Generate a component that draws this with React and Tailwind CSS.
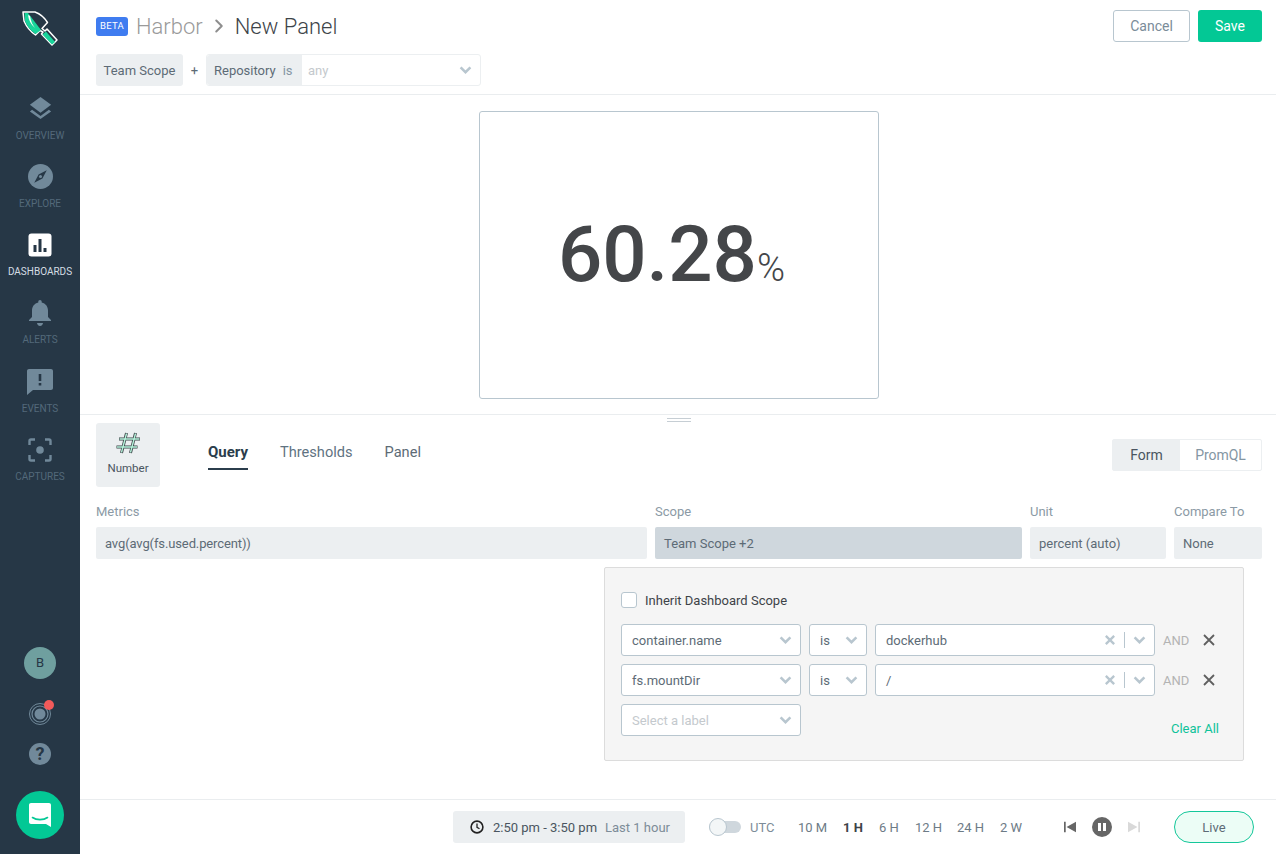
import { ChevronRight } from "lucide-react";

const sans = "font-['Roboto','Liberation_Sans',sans-serif]";

function Chevron({ className = "" }) {
  return (
    <svg viewBox="0 0 14 9" className={`h-[8px] w-[13px] ${className}`} fill="none" stroke="#b8c6cf" strokeWidth="2.8">
      <path d="M1.500 1.500 7 7l5.500-5.500" />
    </svg>
  );
}

function Cross({ className = "", color, width }) {
  return (
    <svg viewBox="0 0 12 12" className={className} fill="none" stroke={color} strokeWidth={width}>
      <path d="M1 1l10 10M11 1 1 11" />
    </svg>
  );
}

function Logo() {
  return (
    <svg viewBox="0 0 80 60" className="h-[60px] w-20">
      <path d="M23 12H35Q43 15 47.500 22.500L42 28.500 45 31 47 29 57 40 52 45 41.500 34 43 32 40 30.500 35.500 35Q28 30 24 21Z" fill="#263746" stroke="#fff" strokeWidth="1.500" strokeLinejoin="round" />
      <path d="M24.500 13 28 13 41 30 35.500 34Q28 29 25 21Z" fill="#19d49b" />
      <path d="M28 15Q29 23 35 28 31 23 30 16Z" fill="#fff" />
      <path d="M46 31.500 55 42 52 44.500 42.500 34.500Z" fill="#19d49b" />
    </svg>
  );
}

function NavItem({ label, active, children }) {
  return (
    <div className="flex h-[68.250px] flex-col items-center">
      <div className="flex h-[30px] w-[30px] items-center justify-center">{children}</div>
      <span className={`mt-[5px] text-[10px] leading-[14px] ${active ? "text-[#d4dde3]" : "text-[#53697a]"}`}>{label}</span>
    </div>
  );
}

function Sidebar() {
  const icon = "#71899a";
  return (
    <aside className="flex h-[854px] w-20 shrink-0 flex-col items-center bg-[#263746]">
      <Logo />
      <nav className="mt-[33.600px] w-full">
        <NavItem label="OVERVIEW">
          <svg viewBox="0 0 26 26" className="mb-[2px] h-[23px] w-[23px]" fill={icon}>
            <path d="M13 1 25 10 13 19 1 10Z" />
            <path d="M3.500 15.500 1 17.500 13 26 25 17.500 22.500 15.500 13 22.500Z" />
          </svg>
        </NavItem>
        <NavItem label="EXPLORE">
          <svg viewBox="0 0 26 26" className="h-[25px] w-[25px]">
            <circle cx="13" cy="13" r="13" fill={icon} />
            <path d="M19.500 6.500 15 15 6.500 19.500 11 11Z" fill="#263746" />
            <circle cx="13" cy="13" r="1.600" fill={icon} />
          </svg>
        </NavItem>
        <NavItem label="DASHBOARDS" active>
          <svg viewBox="0 0 24 24" className="h-6 w-6">
            <rect width="23" height="23" x="0.500" y="0.500" rx="3" fill="#fff" />
            <path d="M5.500 12h3v7h-3zM10.500 6h3v13h-3zM15.500 15h3v4h-3z" fill="#263746" />
          </svg>
        </NavItem>
        <NavItem label="ALERTS">
          <svg viewBox="0 0 22 26" className="h-[26px] w-[22px]" fill={icon}>
            <path d="M11 0c1 0 1.700.8 1.700 1.800v.7C16.600 3.400 19 6.600 19 10.500V17l3 3v1H0v-1l3-3v-6.500c0-3.900 2.400-7.100 6.300-8v-.7C9.300.8 10 0 11 0Z" />
            <path d="M8 23h6c0 1.500-1.300 3-3 3s-3-1.500-3-3Z" />
          </svg>
        </NavItem>
        <NavItem label="EVENTS">
          <svg viewBox="0 0 26 26" className="h-[26px] w-[26px]">
            <path d="M2 0h22c1.100 0 2 .9 2 2v17c0 1.100-.9 2-2 2H6l-6 5V2C0 .9.900 0 2 0Z" fill={icon} />
            <path d="M11.700 5h2.600v7h-2.600zM11.700 14h2.600v2.600h-2.600z" fill="#263746" />
          </svg>
        </NavItem>
        <NavItem label="CAPTURES">
          <svg viewBox="0 0 24 24" className="h-6 w-6" fill="none" stroke={icon} strokeWidth="2.400">
            <path d="M1.500 7V3c0-.8.700-1.500 1.500-1.500h4M17 1.500h4c.8 0 1.500.7 1.500 1.500v4M22.500 17v4c0 .8-.7 1.500-1.500 1.500h-4M7 22.500H3c-.8 0-1.500-.7-1.500-1.500v-4" />
            <circle cx="12" cy="12" r="3.800" fill={icon} stroke="none" />
          </svg>
        </NavItem>
      </nav>
      <div className="mt-auto flex flex-col items-center">
        <div className="flex h-8 w-8 items-center justify-center rounded-full bg-[#6f9f9f] text-[13px] text-[#263746]">B</div>
        <div className="relative mt-6 h-[22px] w-[22px]">
          <svg viewBox="0 0 22 22" className="h-[22px] w-[22px]" fill="none" stroke="#71899a">
            <circle cx="11" cy="11" r="10.500" />
            <circle cx="11" cy="11" r="8" strokeWidth="1.200" />
            <circle cx="11" cy="11" r="5.500" fill="#71899a" stroke="none" />
          </svg>
          <span className="absolute right-[-3px] top-[-3px] h-[10px] w-[10px] rounded-full bg-[#f25a5a]" />
        </div>
        <div className="mt-[18px] flex h-[22px] w-[22px] items-center justify-center rounded-full bg-[#71899a] text-[18px] font-bold leading-none text-[#263746]">?</div>
        <div className="mb-[15px] mt-[26px] flex h-12 w-12 items-center justify-center rounded-full bg-[#03c895]">
          <svg viewBox="0 0 22 24" className="h-6 w-[22px]">
            <path d="M2 0h18c1.100 0 2 .9 2 2v22l-5-3H2c-1.100 0-2-.9-2-2V2C0 .9.900 0 2 0Z" fill="#fff" />
            <path d="M3.500 14.500c4 2.800 11 2.800 15 0" fill="none" stroke="#03c895" strokeWidth="1.600" strokeLinecap="round" />
          </svg>
        </div>
      </div>
    </aside>
  );
}

function Header() {
  return (
    <header className="h-[95px] border-b border-[#eaedef] pl-4 pr-[14px]">
      <div className="flex items-start justify-between pt-[10px]">
        <div className="flex items-center pt-[1px]">
          <span className="flex h-[19px] w-8 items-center justify-center rounded-[3px] bg-[#3f7cf0] text-[9.500px] tracking-[0.3px] text-white">BETA</span>
          <span className="ml-2 h-[30px] text-[22px] font-light leading-[32px] text-[#9a9a9a]">Harbor</span>
          <ChevronRight className="ml-[5px] h-[22px] w-[22px] text-[#8e8e8e]" strokeWidth={2.200} />
          <span className="ml-[5px] h-[30px] text-[22px] font-light leading-[32px] text-[#3d4348]">New Panel</span>
        </div>
        <div className="flex gap-2">
          <button className="h-8 w-[77px] rounded-[3px] border border-[#b8c6cf] text-sm text-[#7a8c99]">Cancel</button>
          <button className="h-8 w-16 rounded-[3px] bg-[#03c895] text-sm text-white">Save</button>
        </div>
      </div>
      <div className="mt-3 flex h-8 items-center text-[13px]">
        <div className="flex h-8 w-[87px] items-center justify-center rounded-[3px] bg-[#eceff1] pt-[2px] text-[#5d6b76]">Team Scope</div>
        <span className="w-[23px] pt-[2px] text-center text-[#5d6b76]">+</span>
        <div className="flex h-8 w-[275px] rounded-[3px] border border-[#eceff1]">
          <div className="flex w-[95px] items-center rounded-l-[3px] bg-[#eceff1] pl-[7px] pt-[2px] text-[#5d6b76]">
            Repository<span className="ml-[7px] text-[#8496a3]">is</span>
          </div>
          <div className="flex flex-1 items-center justify-between pl-[6px] pr-[8px] text-[#c4c9cd]">
            <span className="pt-[2px]">any</span>
            <Chevron />
          </div>
        </div>
      </div>
    </header>
  );
}

function Preview() {
  return (
    <section className="flex h-[320px] justify-center border-b border-[#eaedef] pl-[2px] pt-4">
      <div className="flex h-[288px] w-[400px] items-center justify-center rounded-[3px] border border-[#b8c6cf] pr-[15px] text-[#444649]">
        <span className="text-[78px] font-medium leading-none">60.28</span>
        <span className="mt-[26px] text-[38px] font-light leading-none">%</span>
      </div>
    </section>
  );
}

function SelectBox({ text, width, placeholder }) {
  return (
    <div className={`flex h-8 items-center justify-between rounded-[3px] border border-[#b8c6cf] bg-white pl-[10px] pr-2 text-[13px] ${width} ${placeholder ? "text-[#c4c9cd]" : "text-[#5d6b76]"}`}>
      <span className="pt-[2px]">{text}</span>
      <Chevron />
    </div>
  );
}

function ScopeRow({ name, value }) {
  return (
    <div className="flex h-8 items-center">
      <SelectBox text={name} width="w-[180px]" />
      <div className="ml-2 flex h-8 w-[58px] items-center justify-between rounded-[3px] border border-[#b8c6cf] bg-white pl-[10px] pr-2 text-[13px] text-[#5d6b76]">
        <span className="pt-[2px]">is</span>
        <Chevron />
      </div>
      <div className="ml-2 flex h-8 w-[280px] items-center rounded-[3px] border border-[#b8c6cf] bg-white pl-[10px] pr-2 text-[13px] text-[#5d6b76]">
        <span className="flex-1 pt-[2px]">{value}</span>
        <Cross className="h-[10px] w-[10px]" color="#b8c6cf" width={2.800} />
        <span className="ml-[9px] mr-2 h-4 w-px bg-[#b8c6cf]" />
        <Chevron />
      </div>
      <span className="ml-2 pt-[2px] text-[13px] text-[#b3b3b3]">AND</span>
      <Cross className="ml-[14px] h-3 w-3" color="#5f5f5f" width={1.800} />
    </div>
  );
}

function Editor() {
  return (
    <section className="relative flex-1 pl-4 pr-[14px]">
      <div className="absolute left-[587px] top-[3px] flex w-6 flex-col gap-[2px]">
        <span className="h-px bg-[#c6ced4]" />
        <span className="h-px bg-[#c6ced4]" />
      </div>
      <div className="flex items-start pt-2">
        <div className="flex h-16 w-16 flex-col items-center rounded-[3px] bg-[#eceff1] pt-[8px]">
          <svg viewBox="0 0 26 24" className="h-6 w-[26px]" fill="none">
            <path d="M11.500 2 6.500 22M20.500 2 15.500 22M4 8H25M1.500 16H22.500" stroke="#3d4348" strokeWidth="3" />
            <path d="M11.500 2.500 6.500 21.500M20.500 2.500 15.500 21.500M4.500 8H24.500M2 16H22" stroke="#b4f2da" strokeWidth="1.400" />
          </svg>
          <span className="mt-1 text-[11.500px] leading-[18px] text-[#4a5560]">Number</span>
        </div>
        <div className="ml-12 flex gap-8 pt-[16px] text-[14.600px] leading-[26px]">
          <div className="flex flex-col">
            <span className="text-[15px] font-bold text-[#2b3d4c]">Query</span>
            <span className="mt-[3px] h-[2px] bg-[#2b3d4c]" />
          </div>
          <span className="text-[#5f7382]">Thresholds</span>
          <span className="text-[#5d6b76]">Panel</span>
        </div>
        <div className="ml-auto mt-4 flex h-8 w-[150px] rounded-[2px] border border-[#eceff1] text-sm tracking-[-0.04px]">
          <div className="flex w-[67px] items-center justify-center bg-[#eceff1] text-[#4a5560]">Form</div>
          <div className="flex flex-1 items-center justify-center text-[#8496a3]">PromQL</div>
        </div>
      </div>
      <div className="mt-4 flex gap-2 text-[13px]">
        <div className="w-[551px]">
          <div className="h-6 leading-[18px] text-[#8b9aa5]">Metrics</div>
          <div className="flex h-8 items-center rounded-[2px] bg-[#eceff1] pl-[9px] pt-[2px] tracking-[-0.12px] text-[#5d6b76]">avg(avg(fs.used.percent))</div>
        </div>
        <div className="w-[367px]">
          <div className="h-6 leading-[18px] text-[#8b9aa5]">Scope</div>
          <div className="flex h-8 items-center rounded-[2px] bg-[#cfd7dd] pl-[9px] pt-[2px] text-[#5d6b76]">Team Scope +2</div>
        </div>
        <div className="w-[136px]">
          <div className="h-6 leading-[18px] text-[#8b9aa5]">Unit</div>
          <div className="flex h-8 items-center rounded-[2px] bg-[#eceff1] pl-[9px] pt-[2px] text-[#5d6b76]">percent (auto)</div>
        </div>
        <div className="w-[88px]">
          <div className="h-6 leading-[18px] text-[#8b9aa5]">Compare To</div>
          <div className="flex h-8 items-center rounded-[2px] bg-[#eceff1] pl-[9px] pt-[2px] text-[#5d6b76]">None</div>
        </div>
      </div>
      <div className="ml-[508px] mt-2 h-[194px] w-[640px] rounded-[2px] border border-[#dcdcdc] bg-[#f5f5f5] pl-4 pt-6">
        <div className="flex h-4 items-center">
          <span className="h-4 w-4 rounded-[3px] border border-[#b8c6cf] bg-white" />
          <span className="ml-2 pt-[2px] text-[13px] text-[#3d4348]">Inherit Dashboard Scope</span>
        </div>
        <div className="mt-4 flex flex-col gap-2">
          <ScopeRow name="container.name" value="dockerhub" />
          <ScopeRow name="fs.mountDir" value="/" />
          <div className="flex h-8 items-center justify-between pr-[24px]">
            <SelectBox text="Select a label" width="w-[180px]" placeholder />
            <span className="mt-[18px] text-[13px] text-[#0fc29a]">Clear All</span>
          </div>
        </div>
      </div>
    </section>
  );
}

function Footer() {
  return (
    <footer className="flex h-[55px] items-center border-t border-[#eaedef] pl-[373px] text-[13px]">
      <div className="flex h-8 w-[232px] items-center rounded-[3px] bg-[#eceff1] pl-[17px]">
        <svg viewBox="0 0 14 14" className="h-[14px] w-[14px]" fill="none" stroke="#222" strokeWidth="1.600">
          <circle cx="7" cy="7" r="5.900" />
          <path d="M7 3.500V7.300l2.500 1.500" strokeWidth="1.300" />
        </svg>
        <span className="ml-[9px] pt-[2px] text-[#4a5560]">2:50 pm - 3:50 pm</span>
        <span className="ml-2 pt-[2px] text-[#7d8c98]">Last 1 hour</span>
      </div>
      <div className="relative ml-6 h-3 w-8 rounded-full bg-[#cfd7dd]">
        <span className="absolute left-0 top-[-3px] h-[18px] w-[18px] rounded-full border border-[#b8c6cf] bg-[#f3f6f7]" />
      </div>
      <span className="ml-[9px] w-[48px] pt-[2px] text-[#7d8c98]">UTC</span>
      <div className="flex items-center pt-[2px] text-[#6d7b86]">
        <span className="w-[45px]">10 M</span>
        <span className="w-[36px] font-bold text-[#3d4348]">1 H</span>
        <span className="w-[36px]">6 H</span>
        <span className="w-[42px]">12 H</span>
        <span className="w-[43px]">24 H</span>
        <span className="w-[24px]">2 W</span>
      </div>
      <svg viewBox="0 0 14 12" className="ml-[40px] h-3 w-3" fill="#666">
        <path d="M0 0h2v12H0zM14 0v12L3 6Z" />
      </svg>
      <span className="ml-4 flex h-5 w-5 items-center justify-center rounded-full bg-[#666]">
        <span className="flex gap-[2px]">
          <span className="h-2 w-[3px] bg-white" />
          <span className="h-2 w-[3px] bg-white" />
        </span>
      </span>
      <svg viewBox="0 0 14 12" className="ml-4 h-3 w-3" fill="#d9d9d9">
        <path d="M14 0h-2v12h2zM0 0v12L11 6Z" />
      </svg>
      <span className="ml-[34px] flex h-8 w-20 items-center justify-center rounded-full border border-[#14c79a] bg-[#ecfdf6] pt-[2px] text-[#5d6b76]">Live</span>
    </footer>
  );
}

export default function App() {
  return (
    <div className={`flex h-[854px] w-[1276px] overflow-hidden bg-white ${sans}`}>
      <Sidebar />
      <main className="flex min-w-0 flex-1 flex-col">
        <Header />
        <Preview />
        <Editor />
        <Footer />
      </main>
    </div>
  );
}
